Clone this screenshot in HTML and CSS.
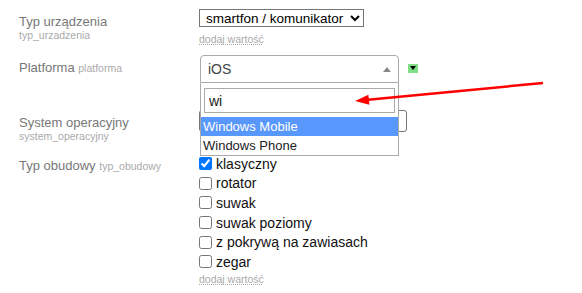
FILE: index.html
```html
<!DOCTYPE html>
<html lang="pl">
<head>
  <meta charset="UTF-8">
  <meta name="viewport" content="width=device-width, initial-scale=1.0">
  <title>Edycja urządzenia</title>
  <link rel="stylesheet" href="styles.css">
</head>
<body>
  <div class="form">
    <div class="row row-type">
      <div class="label">Typ urządzenia<small class="block">typ_urzadzenia</small></div>
      <div class="field">
        <select class="native">
          <option>smartfon / komunikator</option>
        </select>
        <a class="add" href="#">dodaj wartość</a>
      </div>
    </div>

    <div class="row row-platform">
      <div class="label">Platforma <small>platforma</small></div>
      <div class="field inline">
        <div class="s2">
          <div class="s2-box">
            <span class="s2-value">iOS</span>
            <span class="s2-arrow"></span>
          </div>
          <div class="s2-dropdown">
            <div class="s2-search"><input type="text" value="wi"></div>
            <ul class="s2-results">
              <li class="hl">Windows Mobile</li>
              <li>Windows Phone</li>
            </ul>
          </div>
        </div>
        <span class="toggle"></span>
      </div>
    </div>

    <div class="row row-system">
      <div class="label">System operacyjny<small class="block">system_operacyjny</small></div>
      <div class="field">
        <div class="text-box"></div>
      </div>
    </div>

    <div class="row row-case">
      <div class="label">Typ obudowy <small>typ_obudowy</small></div>
      <div class="field">
        <label class="check"><input type="checkbox" checked>klasyczny</label>
        <label class="check"><input type="checkbox">rotator</label>
        <label class="check"><input type="checkbox">suwak</label>
        <label class="check"><input type="checkbox">suwak poziomy</label>
        <label class="check"><input type="checkbox">z pokrywą na zawiasach</label>
        <label class="check"><input type="checkbox">zegar</label>
        <a class="add add-last" href="#">dodaj wartość</a>
      </div>
    </div>
  </div>

  <svg class="pointer" width="582" height="293" viewBox="0 0 582 293">
    <line x1="543" y1="83" x2="368" y2="99.7" stroke="#f00" stroke-width="2.5"/>
    <polygon points="355,101 369.4,104.7 368.4,94.7" fill="#f00"/>
  </svg>
</body>
</html>
```

FILE: styles.css
```css
body {
  margin: 0;
  background: #fff;
  font-family: "Liberation Sans", Arial, sans-serif;
  color: #222;
}
.form {
  padding-top: 9px;
}
.row {
  display: flex;
  align-items: flex-start;
}
.row-type { height: 46px; }
.row-platform { height: 55px; }
.row-system { height: 43px; }
.row-case { margin-top: 1px; }

.label {
  width: 180px;
  padding-left: 19px;
  padding-top: 6px;
  font-size: 13px;
  line-height: 14px;
  color: #777;
}
.row-case .label { padding-top: 5px; }
.label small {
  font-size: 10.5px;
  line-height: 12px;
  color: #aaa;
}
.label small.block { display: block; }

.field {
  display: flex;
  flex-direction: column;
  align-items: flex-start;
}
.field.inline {
  flex-direction: row;
}

.native {
  width: 165px;
  height: 18px;
  margin: 0;
  padding: 0 2px;
  font-family: "Liberation Sans", Arial, sans-serif;
  font-size: 13.5px;
  color: #000;
  border: 1px solid #767676;
  border-radius: 0;
  background: #fff;
}
.add {
  margin-top: 6px;
  font-size: 10.5px;
  line-height: 12px;
  color: #aaa;
  text-decoration: underline dotted #aaa;
}
.add-last { margin-top: 1px; }

/* select2-like box */
.s2 {
  position: relative;
  width: 199px;
  margin-left: 1px;
}
.s2-box {
  position: relative;
  height: 28px;
  box-sizing: border-box;
  border: 1px solid #aaa;
  border-radius: 4px 4px 0 0;
  background: #fff;
}
.s2-value {
  display: block;
  padding-left: 7px;
  font-size: 14px;
  line-height: 26px;
  color: #444;
}
.s2-arrow {
  position: absolute;
  right: 7px;
  top: 11px;
  border-style: solid;
  border-width: 0 4px 5px 4px;
  border-color: transparent transparent #888 transparent;
}
.s2-dropdown {
  position: absolute;
  left: 0;
  right: 0;
  top: 100%;
  z-index: 5;
  background: #fff;
  border: 1px solid #aaa;
  border-top: none;
}
.s2-search {
  padding: 5px 3px 4px;
}
.s2-search input {
  display: block;
  width: 100%;
  height: 25px;
  box-sizing: border-box;
  margin: 0;
  padding: 0 4px;
  border: 1px solid #aaa;
  font-family: "Liberation Sans", Arial, sans-serif;
  font-size: 14px;
  color: #222;
  outline: none;
}
.s2-results {
  margin: 0;
  padding: 0;
  list-style: none;
}
.s2-results li {
  padding: 0 2px;
  font-size: 13px;
  line-height: 19px;
  color: #222;
}
.s2-results li.hl {
  background: #5897fb;
  color: #fff;
}

.toggle {
  position: relative;
  width: 10px;
  height: 9px;
  margin: 9px 0 0 9px;
  background: #7fdf86;
}
.toggle::after {
  content: "";
  position: absolute;
  left: 1.5px;
  top: 2px;
  border-style: solid;
  border-width: 4px 3.5px 0 3.5px;
  border-color: #000 transparent transparent transparent;
}

.text-box {
  width: 208px;
  height: 22px;
  box-sizing: border-box;
  border: 1px solid #767676;
  border-radius: 3px;
}

.check {
  display: flex;
  align-items: center;
  height: 19.6px;
  font-size: 14px;
  color: #111;
}
.check input {
  width: 13px;
  height: 13px;
  margin: 0 4px 0 0;
}

.pointer {
  position: absolute;
  left: 0;
  top: 0;
  pointer-events: none;
  z-index: 10;
}
```
